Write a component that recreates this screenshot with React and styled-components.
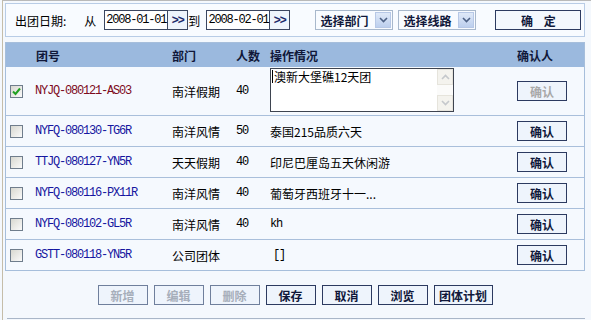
import React from 'react'
import styled, { createGlobalStyle } from 'styled-components'

const GlobalStyle = createGlobalStyle`
  html, body { margin: 0; padding: 0; }
  body {
    background: #f4f8fd;
    font-family: "Noto Sans CJK SC", "Liberation Sans", sans-serif;
    font-size: 12px;
    color: #000;
  }
  * { box-sizing: border-box; }
`;

const rows = [
  { id: 'NYJQ-080121-AS03', dept: '南洋假期', num: '40', op: '澳新大堡礁12天团', checked: true, editing: true },
  { id: 'NYFQ-080130-TG6R', dept: '南洋风情', num: '50', op: '泰国215品质六天' },
  { id: 'TTJQ-080127-YN5R', dept: '天天假期', num: '40', op: '印尼巴厘岛五天休闲游' },
  { id: 'NYFQ-080116-PX11R', dept: '南洋风情', num: '40', op: '葡萄牙西班牙十一...' },
  { id: 'NYFQ-080102-GL5R', dept: '南洋风情', num: '40', op: 'kh', mono: true },
  { id: 'GSTT-080118-YN5R', dept: '公司团体', num: '', op: '[]', mono: true },
];

const tools = [
  { label: '新增', off: true },
  { label: '编辑', off: true },
  { label: '删除', off: true },
  { label: '保存' },
  { label: '取消' },
  { label: '浏览' },
  { label: '团体计划', wide: true },
];

function App() {
  return (
    <>
      <GlobalStyle />
      <Page>
        <FilterBar>
          <Label>出团日期:</Label>
          <Label $ml={18}>从</Label>
          <DateInput $ml={8}>2008-01-01</DateInput>
          <PickBtn>&gt;&gt;</PickBtn>
          <Label>到</Label>
          <DateInput $ml={6}>2008-02-01</DateInput>
          <PickBtn>&gt;&gt;</PickBtn>
          <Select $ml={25}>
            选择部门
            <Arrow><Chevron down /></Arrow>
          </Select>
          <Select $ml={5}>
            选择线路
            <Arrow><Chevron down /></Arrow>
          </Select>
          <OkBtn>确&nbsp;&nbsp;&nbsp;&nbsp;定</OkBtn>
        </FilterBar>

        <Table>
          <HeadRow>
            <span />
            <span>团号</span>
            <span>部门</span>
            <span>人数</span>
            <span>操作情况</span>
            <span>确认人</span>
          </HeadRow>
          {rows.map((r) => (
            <Row key={r.id} $tall={r.editing}>
              <Check $on={r.checked}>
                {r.checked && (
                  <svg width="9" height="9" viewBox="0 0 9 9">
                    <path d="M1 4.5 L3.5 7 L8 1.5" stroke="#21a121" strokeWidth="2" fill="none" />
                  </svg>
                )}
              </Check>
              <Code $sel={r.checked}>{r.id}</Code>
              <span>{r.dept}</span>
              <Code $plain>{r.num}</Code>
              {r.editing ? (
                <Memo>
                  <MemoText>{r.op}</MemoText>
                  <ScrollBar>
                    <ScrollBtn><Chevron /></ScrollBtn>
                    <ScrollBtn><Chevron down /></ScrollBtn>
                  </ScrollBar>
                </Memo>
              ) : r.mono ? (
                <Code $plain $pl={r.op === '[]' ? 3 : 0}>{r.op}</Code>
              ) : (
                <span>{r.op}</span>
              )}
              <Confirm $off={r.editing}>确认</Confirm>
            </Row>
          ))}
        </Table>

        <Toolbar>
          {tools.map((t) => (
            <ToolBtn key={t.label} $off={t.off} $wide={t.wide}>{t.label}</ToolBtn>
          ))}
        </Toolbar>
        <Footer />
      </Page>
    </>
  )
}

function Chevron({ down }) {
  return (
    <svg width="9" height="6" viewBox="0 0 9 6">
      <path
        d={down ? 'M1 1 L4.5 4.5 L8 1' : 'M1 5 L4.5 1.5 L8 5'}
        stroke={down ? '#4d6185' : '#b9c1cc'}
        strokeWidth="1.6"
        fill="none"
      />
    </svg>
  );
}

const Page = styled.div`
  margin-left: 2px;
  border-top: 1px solid #b9b9b9;
  border-left: 1px solid #c5bda9;
  padding: 2px 6px 0 2px;
  min-height: 320px;
`;

const FilterBar = styled.div`
  height: 34px;
  display: flex;
  align-items: center;
  padding-left: 9px;
  background: #f8fbff;
  border: 1px solid #b8cce6;
`;

const Label = styled.span`
  margin-left: ${(p) => p.$ml || 0}px;
  font-size: 12px;
  color: #000;
`;

const DateInput = styled.div`
  margin-left: ${(p) => p.$ml || 0}px;
  width: 64px;
  height: 20px;
  display: flex;
  align-items: center;
  padding-left: 1px;
  background: #fff;
  border: 1px solid #3b4660;
  font-family: "Liberation Mono", monospace;
  font-size: 12px;
  letter-spacing: -1.2px;
`;

const PickBtn = styled.div`
  width: 20px;
  height: 20px;
  display: flex;
  align-items: center;
  justify-content: center;
  border: 1px solid #3b4660;
  border-left: none;
  background: #eef4fc;
  color: #1d2a6a;
  font-family: "Liberation Sans", sans-serif;
  font-size: 12px;
  font-weight: 700;
  letter-spacing: -1px;
`;

const Select = styled.div`
  margin-left: ${(p) => p.$ml || 0}px;
  width: 78px;
  height: 20px;
  display: flex;
  align-items: center;
  justify-content: space-between;
  padding: 0 1px 0 4px;
  border: 1px solid #a8b8cc;
  background: #f8fbff;
  color: #10183a;
  font-weight: 700;
`;

const Arrow = styled.span`
  width: 16px;
  height: 16px;
  display: flex;
  align-items: center;
  justify-content: center;
  background: linear-gradient(#dfe9f8, #bccfee);
  border: 1px solid #b7c8e6;
`;

const OkBtn = styled.div`
  margin-left: 19px;
  width: 86px;
  height: 20px;
  display: flex;
  align-items: center;
  justify-content: center;
  border: 1px solid #2c3a60;
  background: #f3f7fd;
  color: #10183a;
  font-weight: 700;
`;

const Table = styled.div`
  margin-top: 5px;
  border: 1px solid #a6bedb;
  background: #f5f9fe;
`;

const grid = `
  display: grid;
  grid-template-columns: 25px 137px 64px 34px 247px 1fr;
  align-items: center;
  padding-left: 4px;
`;

const HeadRow = styled.div`
  ${grid}
  height: 24px;
  background: #9bb9de;
  font-weight: 700;
  color: #10183a;
  & > span:nth-child(2) { padding-left: 1px; }
`;

const Row = styled.div`
  ${grid}
  height: ${(p) => (p.$tall ? 49 : 31)}px;
  border-bottom: 1px solid #a9bfdb;
  &:last-child { border-bottom: none; height: 30px; }
`;

const Check = styled.span`
  width: 13px;
  height: 13px;
  display: flex;
  align-items: center;
  justify-content: center;
  border: 1px solid #6f7d8c;
  background: linear-gradient(135deg, #d8d8d0, #fafafa);
`;

const Code = styled.span`
  padding-left: ${(p) => p.$pl || 0}px;
  font-family: "Liberation Mono", monospace;
  font-size: 12px;
  letter-spacing: -1.2px;
  color: ${(p) => (p.$plain ? '#000' : p.$sel ? '#7d0a1c' : '#1616a0')};
`;

const Memo = styled.div`
  width: 184px;
  height: 44px;
  display: flex;
  margin-top: -2px;
  border: 1px solid #3e4450;
  background: #fff;
`;

const MemoText = styled.div`
  flex: 1;
  padding-left: 1px;
  border-left: 1px solid #000;
  margin-left: 1px;
  height: 13px;
  line-height: 13px;
  margin-top: 1px;
  white-space: nowrap;
`;

const ScrollBar = styled.div`
  width: 16px;
  display: flex;
  flex-direction: column;
  justify-content: space-between;
  background: #fbfbfa;
`;

const ScrollBtn = styled.span`
  height: 16px;
  display: flex;
  align-items: center;
  justify-content: center;
  background: #f4f3ee;
  border: 1px solid #e6e4dc;
  & path { stroke: #c5c8cc; }
`;

const Confirm = styled.div`
  width: 50px;
  height: 20px;
  display: flex;
  align-items: center;
  justify-content: center;
  border: 1px solid #2c3a60;
  background: #eef4fc;
  color: ${(p) => (p.$off ? '#a8a8a8' : '#10183a')};
  font-weight: 700;
`;

const Toolbar = styled.div`
  margin-top: 14px;
  display: flex;
  justify-content: center;
  gap: 6px;
`;

const ToolBtn = styled.div`
  width: ${(p) => (p.$wide ? 59 : 50)}px;
  height: 20px;
  display: flex;
  align-items: center;
  justify-content: center;
  border: 1px solid ${(p) => (p.$off ? '#6f7f9c' : '#2c3a60')};
  background: #eef4fc;
  color: ${(p) => (p.$off ? '#a6aeba' : '#10183a')};
  font-weight: 700;
`;

const Footer = styled.div`
  margin-top: 13px;
  margin-left: 2px;
  height: 8px;
  border-top: 1px solid #a9b6c8;
`;

export default App
